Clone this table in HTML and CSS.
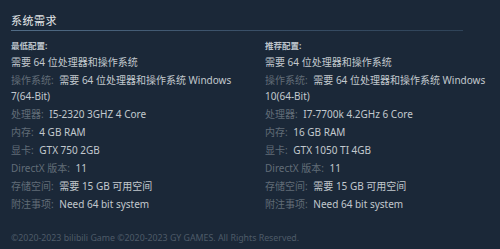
FILE: index.html
```html
<!DOCTYPE html>
<html lang="zh-CN">
<head>
<meta charset="utf-8">
<link rel="stylesheet" href="styles.css">
</head>
<body>
<div class="page">
  <h2 class="title">系统需求</h2>
  <div class="rule"></div>
  <div class="cols">
    <div class="col">
      <div class="sub">最低配置:</div>
      <ul class="reqs">
        <li>需要 64 位处理器和操作系统</li>
        <li><span class="lbl">操作系统:</span> 需要 64 位处理器和操作系统 Windows <span class="nw">7(64-Bit)</span></li>
        <li><span class="lbl">处理器:</span> I5-2320 3GHZ 4 Core</li>
        <li><span class="lbl">内存:</span> 4 GB RAM</li>
        <li><span class="lbl">显卡:</span> GTX 750 2GB</li>
        <li><span class="lbl">DirectX 版本:</span> 11</li>
        <li><span class="lbl">存储空间:</span> 需要 15 GB 可用空间</li>
        <li><span class="lbl">附注事项:</span> Need 64 bit system</li>
      </ul>
    </div>
    <div class="col">
      <div class="sub">推荐配置:</div>
      <ul class="reqs">
        <li>需要 64 位处理器和操作系统</li>
        <li><span class="lbl">操作系统:</span> 需要 64 位处理器和操作系统 Windows <span class="nw">10(64-Bit)</span></li>
        <li><span class="lbl">处理器:</span> I7-7700k 4.2GHz 6 Core</li>
        <li><span class="lbl">内存:</span> 16 GB RAM</li>
        <li><span class="lbl">显卡:</span> GTX 1050 TI 4GB</li>
        <li><span class="lbl">DirectX 版本:</span> 11</li>
        <li><span class="lbl">存储空间:</span> 需要 15 GB 可用空间</li>
        <li><span class="lbl">附注事项:</span> Need 64 bit system</li>
      </ul>
    </div>
  </div>
  <div class="footer">©2020-2023 bilibili Game ©2020-2023 GY GAMES. All Rights Reserved.</div>
</div>
</body>
</html>
```
FILE: styles.css
```css
html, body {
  margin: 0;
  padding: 0;
  background: #1b2838;
  height: 100%;
}
body {
  font-family: "Noto Sans", "Noto Sans CJK SC", "Liberation Sans", sans-serif;
  color: #c2c8ce;
  overflow: hidden;
}
.page {
  padding: 13px 0 0 11px;
}
.title {
  margin: 0;
  font-size: 11px;
  line-height: 15px;
  font-weight: normal;
  letter-spacing: 0.5px;
  color: #e6e8ea;
}
.rule {
  margin-top: 2px;
  width: 452px;
  height: 1px;
  background: linear-gradient(to right, #516c86 0%, #3a5068 50%, #2f4358 100%);
}
.cols {
  display: grid;
  grid-template-columns: 244px 235px;
  column-gap: 10px;
}
.sub {
  margin-top: 9px;
  font-size: 8.5px;
  line-height: 12px;
  font-weight: bold;
  color: #bcc3ca;
}
.reqs {
  list-style: none;
  margin: 2px 0 0;
  padding: 0;
  font-size: 10px;
  line-height: 16px;
}
.reqs li {
  margin-bottom: 2px;
}
.lbl {
  color: #616c77;
  margin-right: 3px;
}
.nw {
  white-space: nowrap;
}
.footer {
  margin-top: 18px;
  font-size: 8.8px;
  line-height: 12px;
  color: #4e5b68;
}
```
